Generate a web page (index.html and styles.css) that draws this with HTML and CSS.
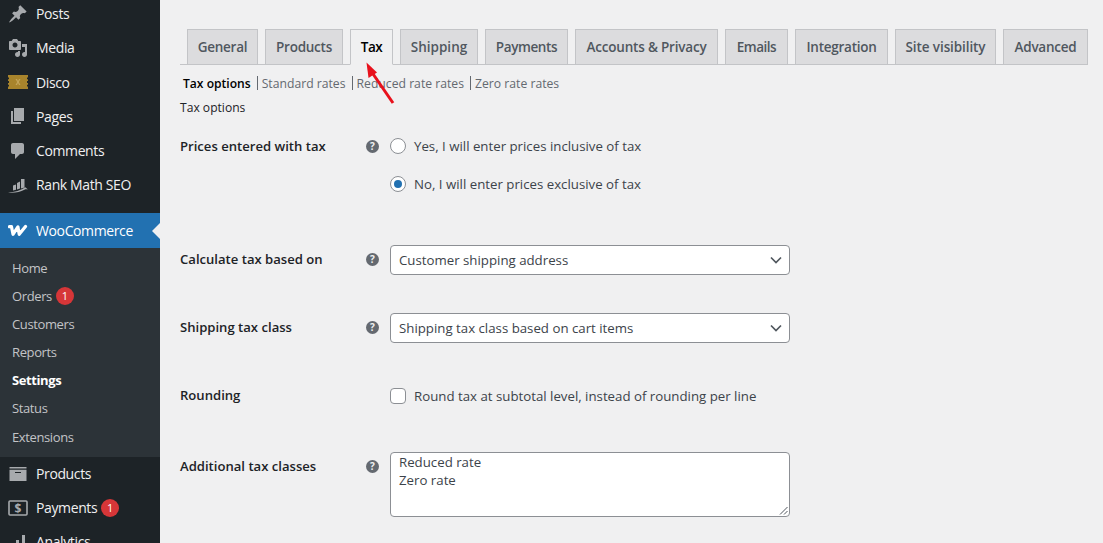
FILE: index.html
```html
<!DOCTYPE html>
<html lang="en">
<head>
<meta charset="utf-8">
<title>WooCommerce Tax Settings</title>
<link rel="stylesheet" href="styles.css">
</head>
<body>
<div class="page">
  <nav class="sidebar">
    <ul class="menu menu-top">
      <li class="item"><svg class="icon" viewBox="0 0 20 20"><path d="M10.44 3.02l1.82-1.82 6.36 6.35-1.83 1.82c-1.05-.68-2.48-.57-3.41.36l-.75.75c-.92.93-1.04 2.35-.35 3.41l-1.83 1.82-2.41-2.41-2.8 2.79c-.42.42-3.38 2.71-3.8 2.29s1.86-3.39 2.28-3.81l2.79-2.79L4.1 9.36l1.83-1.82c1.05.69 2.48.57 3.4-.36l.75-.75c.93-.92 1.05-2.35.36-3.41z"/></svg><span>Posts</span></li>
      <li class="item"><svg class="icon" viewBox="0 0 20 20"><path d="M13 11V4c0-.55-.45-1-1-1h-1.67L9 1H5L3.67 3H2c-.55 0-1 .45-1 1v7c0 .55.45 1 1 1h10c.55 0 1-.45 1-1zM7 4.500c1.380 0 2.500 1.120 2.500 2.500S8.380 9.500 7 9.500 4.500 8.380 4.500 7 5.620 4.500 7 4.500zM14 6h5v10.500c0 1.380-1.120 2.500-2.500 2.500S14 17.880 14 16.500s1.120-2.500 2.500-2.500c.17 0 .34.02.5.05V9h-3V6zm-4 8.050V13h2v3.500c0 1.380-1.120 2.500-2.500 2.500S7 17.880 7 16.500 8.120 14 9.500 14c.17 0 .34.02.5.05z"/></svg><span>Media</span></li>
      <li class="item"><svg class="icon" viewBox="0 0 20 20"><path class="ticket" d="M0 3h20v2.400h-1v1.800h1v1.800h-1v2h1v1.800h-1v1.800h1V17H0v-2.400h1v-1.800H0v-1.800h1V9H0V7.200h1V5.400H0z"/><path class="ticket-mark" d="M7.500 7h1.500l1 2 1-2h1.500l-1.700 3 1.700 3H11l-1-2-1 2H7.500l1.700-3z"/></svg><span>Disco</span></li>
      <li class="item"><svg class="icon" viewBox="0 0 20 20"><path d="M6 15V2h10v13H6zm-1 1h8v2H3V5h2v11z"/></svg><span>Pages</span></li>
      <li class="item"><svg class="icon" viewBox="0 0 20 20"><path d="M5 2h9c1.100 0 2 .9 2 2v7c0 1.100-.9 2-2 2h-2l-5 5v-5H5c-1.100 0-2-.9-2-2V4c0-1.100.9-2 2-2z"/></svg><span>Comments</span></li>
      <li class="item"><svg class="icon" viewBox="0 0 20 20"><path d="M5 10.500l3-1v5.200l-3 .8zM9 8l3-1.500v7l-3 1zM13 4h3.500v8.500L13 13.500zM0 17.500c6.500-.3 13-2.200 17.300-5.300l2.700 2.300c-1.500-.3-2.700-.2-3.600.3-4.500 2.500-10.400 3.300-16.400 2.700z"/></svg><span>Rank Math SEO</span></li>
    </ul>
    <div class="woo">
      <div class="item item-active"><svg class="icon icon-woo" viewBox="0 0 20 12"><path d="M1.500 2.200h2L5 9.800 9.900 2.400l1.300 7.400 6.300-7.800"/></svg><span>WooCommerce</span></div>
      <ul class="submenu">
        <li>Home</li>
        <li>Orders <b class="badge">1</b></li>
        <li>Customers</li>
        <li>Reports</li>
        <li class="current">Settings</li>
        <li>Status</li>
        <li>Extensions</li>
      </ul>
    </div>
    <ul class="menu menu-bottom">
      <li class="item"><svg class="icon" viewBox="0 0 20 20"><path d="M18.500 3v1.500h-17V3h17zM1.500 5.800h17V17h-17V5.800zm11.500 3.200V8H7v1h6z"/></svg><span>Products</span></li>
      <li class="item"><svg class="icon" viewBox="0 0 20 20"><rect class="pay-card" x="1" y="3" width="18" height="14" rx="1"/><text class="pay-sign" x="10" y="14.500" text-anchor="middle">$</text></svg><span>Payments</span> <b class="badge">1</b></li>
      <li class="item"><svg class="icon" viewBox="0 0 20 20"><path d="M2 13h3v5H2zM8 8h3v10H8zM14 3h3v15h-3z"/></svg><span>Analytics</span></li>
    </ul>
  </nav>

  <main class="content">
    <div class="tabs">
      <a class="tab">General</a>
      <a class="tab">Products</a>
      <a class="tab tab-active">Tax</a>
      <a class="tab">Shipping</a>
      <a class="tab">Payments</a>
      <a class="tab">Accounts &amp; Privacy</a>
      <a class="tab">Emails</a>
      <a class="tab">Integration</a>
      <a class="tab">Site visibility</a>
      <a class="tab">Advanced</a>
    </div>
    <ul class="subsub">
      <li class="sub-current">Tax options</li>
      <li>Standard rates</li>
      <li>Reduced rate rates</li>
      <li>Zero rate rates</li>
    </ul>
    <h2 class="section">Tax options</h2>

    <div class="row row-prices">
      <div class="label">Prices entered with tax</div>
      <span class="help">?</span>
      <div class="stack">
        <label class="choice"><span class="radio"></span>Yes, I will enter prices inclusive of tax</label>
        <label class="choice"><span class="radio radio-on"></span>No, I will enter prices exclusive of tax</label>
      </div>
    </div>
    <div class="row row-based">
      <div class="label">Calculate tax based on</div>
      <span class="help">?</span>
      <div class="select">Customer shipping address<svg class="chev" viewBox="0 0 12 8"><path d="M1 1.500l5 5 5-5"/></svg></div>
    </div>
    <div class="row row-class">
      <div class="label">Shipping tax class</div>
      <span class="help">?</span>
      <div class="select">Shipping tax class based on cart items<svg class="chev" viewBox="0 0 12 8"><path d="M1 1.500l5 5 5-5"/></svg></div>
    </div>
    <div class="row row-round">
      <div class="label">Rounding</div>
      <span class="help help-empty"></span>
      <label class="choice"><span class="check"></span>Round tax at subtotal level, instead of rounding per line</label>
    </div>
    <div class="row row-classes">
      <div class="label">Additional tax classes</div>
      <span class="help">?</span>
      <div class="textarea">Reduced rate<br>Zero rate<svg class="grip" viewBox="0 0 9 9"><path d="M8.500 1L1 8.500M8.500 5L5 8.500"/></svg></div>
    </div>
  </main>
</div>
<svg class="arrow" viewBox="0 0 40 50"><path class="arrow-line" d="M33 44L11 12"/><path class="arrow-head" d="M6.500 3.500L17 13.500 8.500 19z"/></svg>
</body>
</html>
```
FILE: styles.css
```css
* { box-sizing: border-box; }
html, body { margin: 0; height: 100%; overflow: hidden; }
body { background: #f0f0f1; color: #3c434a; font-family: "Open Sans", "Liberation Sans", sans-serif; font-size: 13px; }
ul { list-style: none; margin: 0; padding: 0; }
.page { display: flex; height: 543px; overflow: hidden; }

.sidebar { flex: 0 0 160px; background: #1d2327; color: #f0f0f1; display: flex; flex-direction: column; }
.menu-top { margin-top: -3.3px; }
.item { display: flex; align-items: center; height: 34.2px; padding-left: 8px; font-size: 14px; letter-spacing: -.38px; }
.icon { flex: 0 0 20px; width: 20px; height: 20px; margin-right: 8px; fill: #a7aaad; }
.ticket { fill: #a8842c; }
.ticket-mark { fill: #c4a55a; }
.icon-woo { height: 13px; fill: none; stroke: #fff; stroke-width: 3.2; stroke-linejoin: round; stroke-linecap: round; }
.pay-card { fill: none; stroke: #a7aaad; stroke-width: 1.6; }
.pay-sign { fill: #a7aaad; font-family: "Open Sans", sans-serif; font-size: 12px; font-weight: 700; letter-spacing: 0; }
.woo { margin-top: 11.3px; }
.item-active { background: #2271b1; color: #fff; height: 35px; position: relative; }
.item-active::after { content: ""; position: absolute; right: 0; top: 10px; border: 8px solid transparent; border-right-color: #f0f0f1; border-left-width: 0; }
.submenu { background: #2c3338; color: #c3c4c7; padding: 6px 0 6px 12px; font-size: 13px; letter-spacing: -.38px; }
.submenu li { display: flex; align-items: center; height: 28px; gap: 4px; }
.submenu li:last-child { margin-top: 1px; }
.submenu .current { color: #fff; font-weight: 700; letter-spacing: -.4px; }
.badge { display: inline-block; width: 18px; height: 18px; border-radius: 50%; background: #d63638; color: #fff; font-size: 11px; font-weight: 400; line-height: 18px; text-align: center; letter-spacing: 0; }
.item .badge { margin-left: 4px; }
.menu-bottom { margin-top: -.7px; }

.content { flex: 1; padding: 29px 15px 0 20px; min-width: 0; }
.tabs { display: flex; gap: 7px; height: 36px; padding-left: 7px; border-bottom: 1px solid #c3c4c7; }
.tab { height: 36px; border: 1px solid #c3c4c7; background: #dcdcde; color: #50575e; font-size: 13.5px; font-weight: 600; line-height: 34px; text-align: center; white-space: nowrap; letter-spacing: -.25px; }
.tab:nth-child(1) { width: 71px; }
.tab:nth-child(2) { width: 78px; }
.tab:nth-child(3) { width: 43px; letter-spacing: -.5px; }
.tab:nth-child(4) { width: 78px; letter-spacing: 0; }
.tab:nth-child(5) { width: 83px; letter-spacing: -.4px; }
.tab:nth-child(6) { width: 143px; letter-spacing: -.2px; }
.tab:nth-child(7) { width: 63px; letter-spacing: -.5px; }
.tab:nth-child(8) { width: 93px; }
.tab:nth-child(9) { width: 101px; letter-spacing: -.1px; }
.tab:nth-child(10) { width: 85px; }
.tab-active { background: #f0f0f1; border-bottom-color: #f0f0f1; color: #000; }
.subsub { display: flex; align-items: center; height: 20px; margin-top: 8px; padding-left: 3px; color: #646970; font-size: 12.2px; }
.subsub li { display: flex; align-items: center; }
.subsub li + li::before { content: ""; width: 1px; height: 14px; margin: 0 4px 0 6px; background: #646970; }
.sub-current { color: #000; font-size: 12.1px; font-weight: 600; }
.section { margin: 5px 0 0; height: 20px; color: #1d2327; font-size: 12.1px; font-weight: 400; line-height: 20px; }

.row { display: grid; grid-template-columns: 176px 14px 400px; column-gap: 10px; align-items: start; }
.label { color: #1d2327; font-size: 13.1px; font-weight: 600; line-height: 20px; }
.help { width: 13px; height: 13px; margin-top: 4px; border-radius: 50%; background: #646970; color: #f0f0f1; font-size: 10px; font-weight: 700; line-height: 13px; text-align: center; }
.help-empty { background: none; }
.row-prices { margin-top: 18px; }
.row-based { margin-top: 51px; }
.row-class { margin-top: 38px; }
.row-round { margin-top: 43px; }
.row-classes { margin-top: 46px; }
.row-based .label, .row-class .label, .row-classes .label { margin-top: 4px; }
.row-based .help, .row-class .help, .row-classes .help { margin-top: 8px; }
.row-round .label { margin-top: -1px; }

.stack { display: flex; flex-direction: column; gap: 18px; }
.choice { display: flex; align-items: center; height: 20px; font-size: 13.25px; white-space: nowrap; color: #3c434a; }
.radio { width: 16px; height: 16px; margin-right: 8px; border: 1px solid #8c8f94; border-radius: 50%; background: #fff; position: relative; }
.radio-on::after { content: ""; position: absolute; left: 3px; top: 3px; width: 8px; height: 8px; border-radius: 50%; background: #2271b1; }
.check { width: 16px; height: 16px; margin-right: 8px; border: 1px solid #8c8f94; border-radius: 4px; background: #fff; }
.select { display: flex; align-items: center; justify-content: space-between; height: 30px; padding: 0 7px 0 8px; border: 1px solid #8c8f94; border-radius: 4px; background: #fff; font-size: 13.25px; color: #3c434a; }
.chev { width: 12px; height: 8px; fill: none; stroke: #50575e; stroke-width: 1.7; }
.textarea { position: relative; height: 65px; padding: 0 8px; border: 1px solid #8c8f94; border-radius: 4px; background: #fff; font-size: 13.25px; line-height: 18px; color: #3c434a; }
.grip { position: absolute; right: 1px; bottom: 1px; width: 9px; height: 9px; fill: none; stroke: #50575e; stroke-width: 1; }

.arrow { position: absolute; left: 360px; top: 59px; width: 40px; height: 50px; }
.arrow-line { fill: none; stroke: #e8111c; stroke-width: 3; }
.arrow-head { fill: #e8111c; }
```
